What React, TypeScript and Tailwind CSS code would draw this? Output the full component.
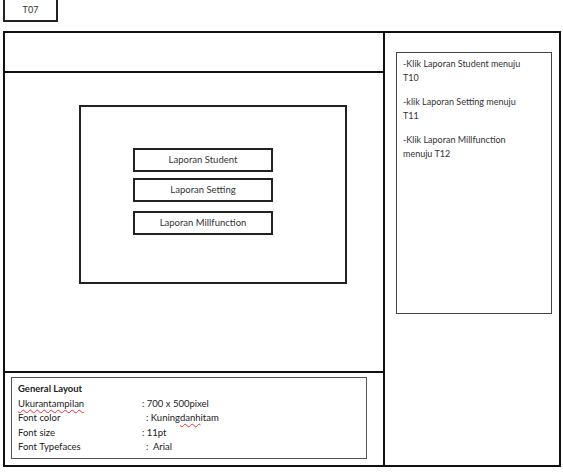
import React from 'react';

const menuItems = ['Laporan Student', 'Laporan Setting', 'Laporan Millfunction'];

const notes = [
    ['-Klik Laporan Student menuju', 'T10'],
    ['-klik Laporan Setting menuju', 'T11'],
    ['-Klik Laporan Millfunction', 'menuju T12'],
];

const Squiggle: React.FC<{ children: React.ReactNode }> = ({ children }) => (
    <span className="underline decoration-wavy decoration-red-500 decoration-1 underline-offset-2">{children}</span>
);

const App: React.FC = () => {
    return (
        <div className="w-[563px] h-[472px] bg-white text-[#333] font-['Lato',sans-serif] overflow-hidden">
            <div className="ml-[3px] w-[55px] h-[22px] border-2 border-t-0 border-[#222] flex items-center justify-center text-[9px]">
                T07
            </div>

            <div className="mt-[9px] ml-[3px] w-[558px] h-[436px] border-2 border-[#111] flex">
                {/* left column: header, content, layout notes */}
                <div className="w-[380px] border-r-2 border-[#111] flex flex-col">
                    <div className="h-[40px] border-b-2 border-[#111]" />
                    <div className="h-[300px] border-b-2 border-[#111] pt-[32px] pl-[74px]">
                        <div className="w-[268px] h-[179px] border-2 border-[#222] pt-[41px] pl-[52px]">
                            {menuItems.map((label, i) => (
                                <div
                                    key={label}
                                    className={`w-[140px] h-[24px] border-2 border-[#222] flex items-center justify-center text-[9.5px] ${i === 1 ? 'mt-[6px]' : i === 2 ? 'mt-[9px]' : ''}`}
                                >
                                    {label}
                                </div>
                            ))}
                        </div>
                    </div>
                    <div className="flex-1 pt-[4px] pl-[6px]">
                        <div className="w-[356px] h-[82px] border-[1.5px] border-[#555] pl-[6px] pt-[4px] text-[9.5px] leading-[14.5px] text-[#222]">
                            <div className="font-bold">General Layout</div>
                            <div className="flex">
                                <span className="w-[124px]"><Squiggle>Ukurantampilan</Squiggle></span>
                                <span>: 700 x 500pixel</span>
                            </div>
                            <div className="flex">
                                <span className="w-[124px]">Font color</span>
                                <span className="pl-[4px]">: Kuning<Squiggle>danh</Squiggle>itam</span>
                            </div>
                            <div className="flex">
                                <span className="w-[124px]">Font size</span>
                                <span>: 11pt</span>
                            </div>
                            <div className="flex">
                                <span className="w-[124px]">Font Typefaces</span>
                                <span className="pl-[4px]">:&nbsp; Arial</span>
                            </div>
                        </div>
                    </div>
                </div>

                {/* right column: navigation notes */}
                <div className="flex-1 pt-[19px] pl-[11px]">
                    <div className="w-[156px] h-[262px] border-[1.5px] border-[#444] pl-[6px] pt-[4px] text-[9px] leading-[14px] text-[#333]">
                        {notes.map(([a, b], i) => (
                            <div key={a} className={i > 0 ? 'mt-[10px]' : ''}>
                                <div>{a}</div>
                                <div>{b}</div>
                            </div>
                        ))}
                    </div>
                </div>
            </div>
        </div>
    );
};

export default App;
